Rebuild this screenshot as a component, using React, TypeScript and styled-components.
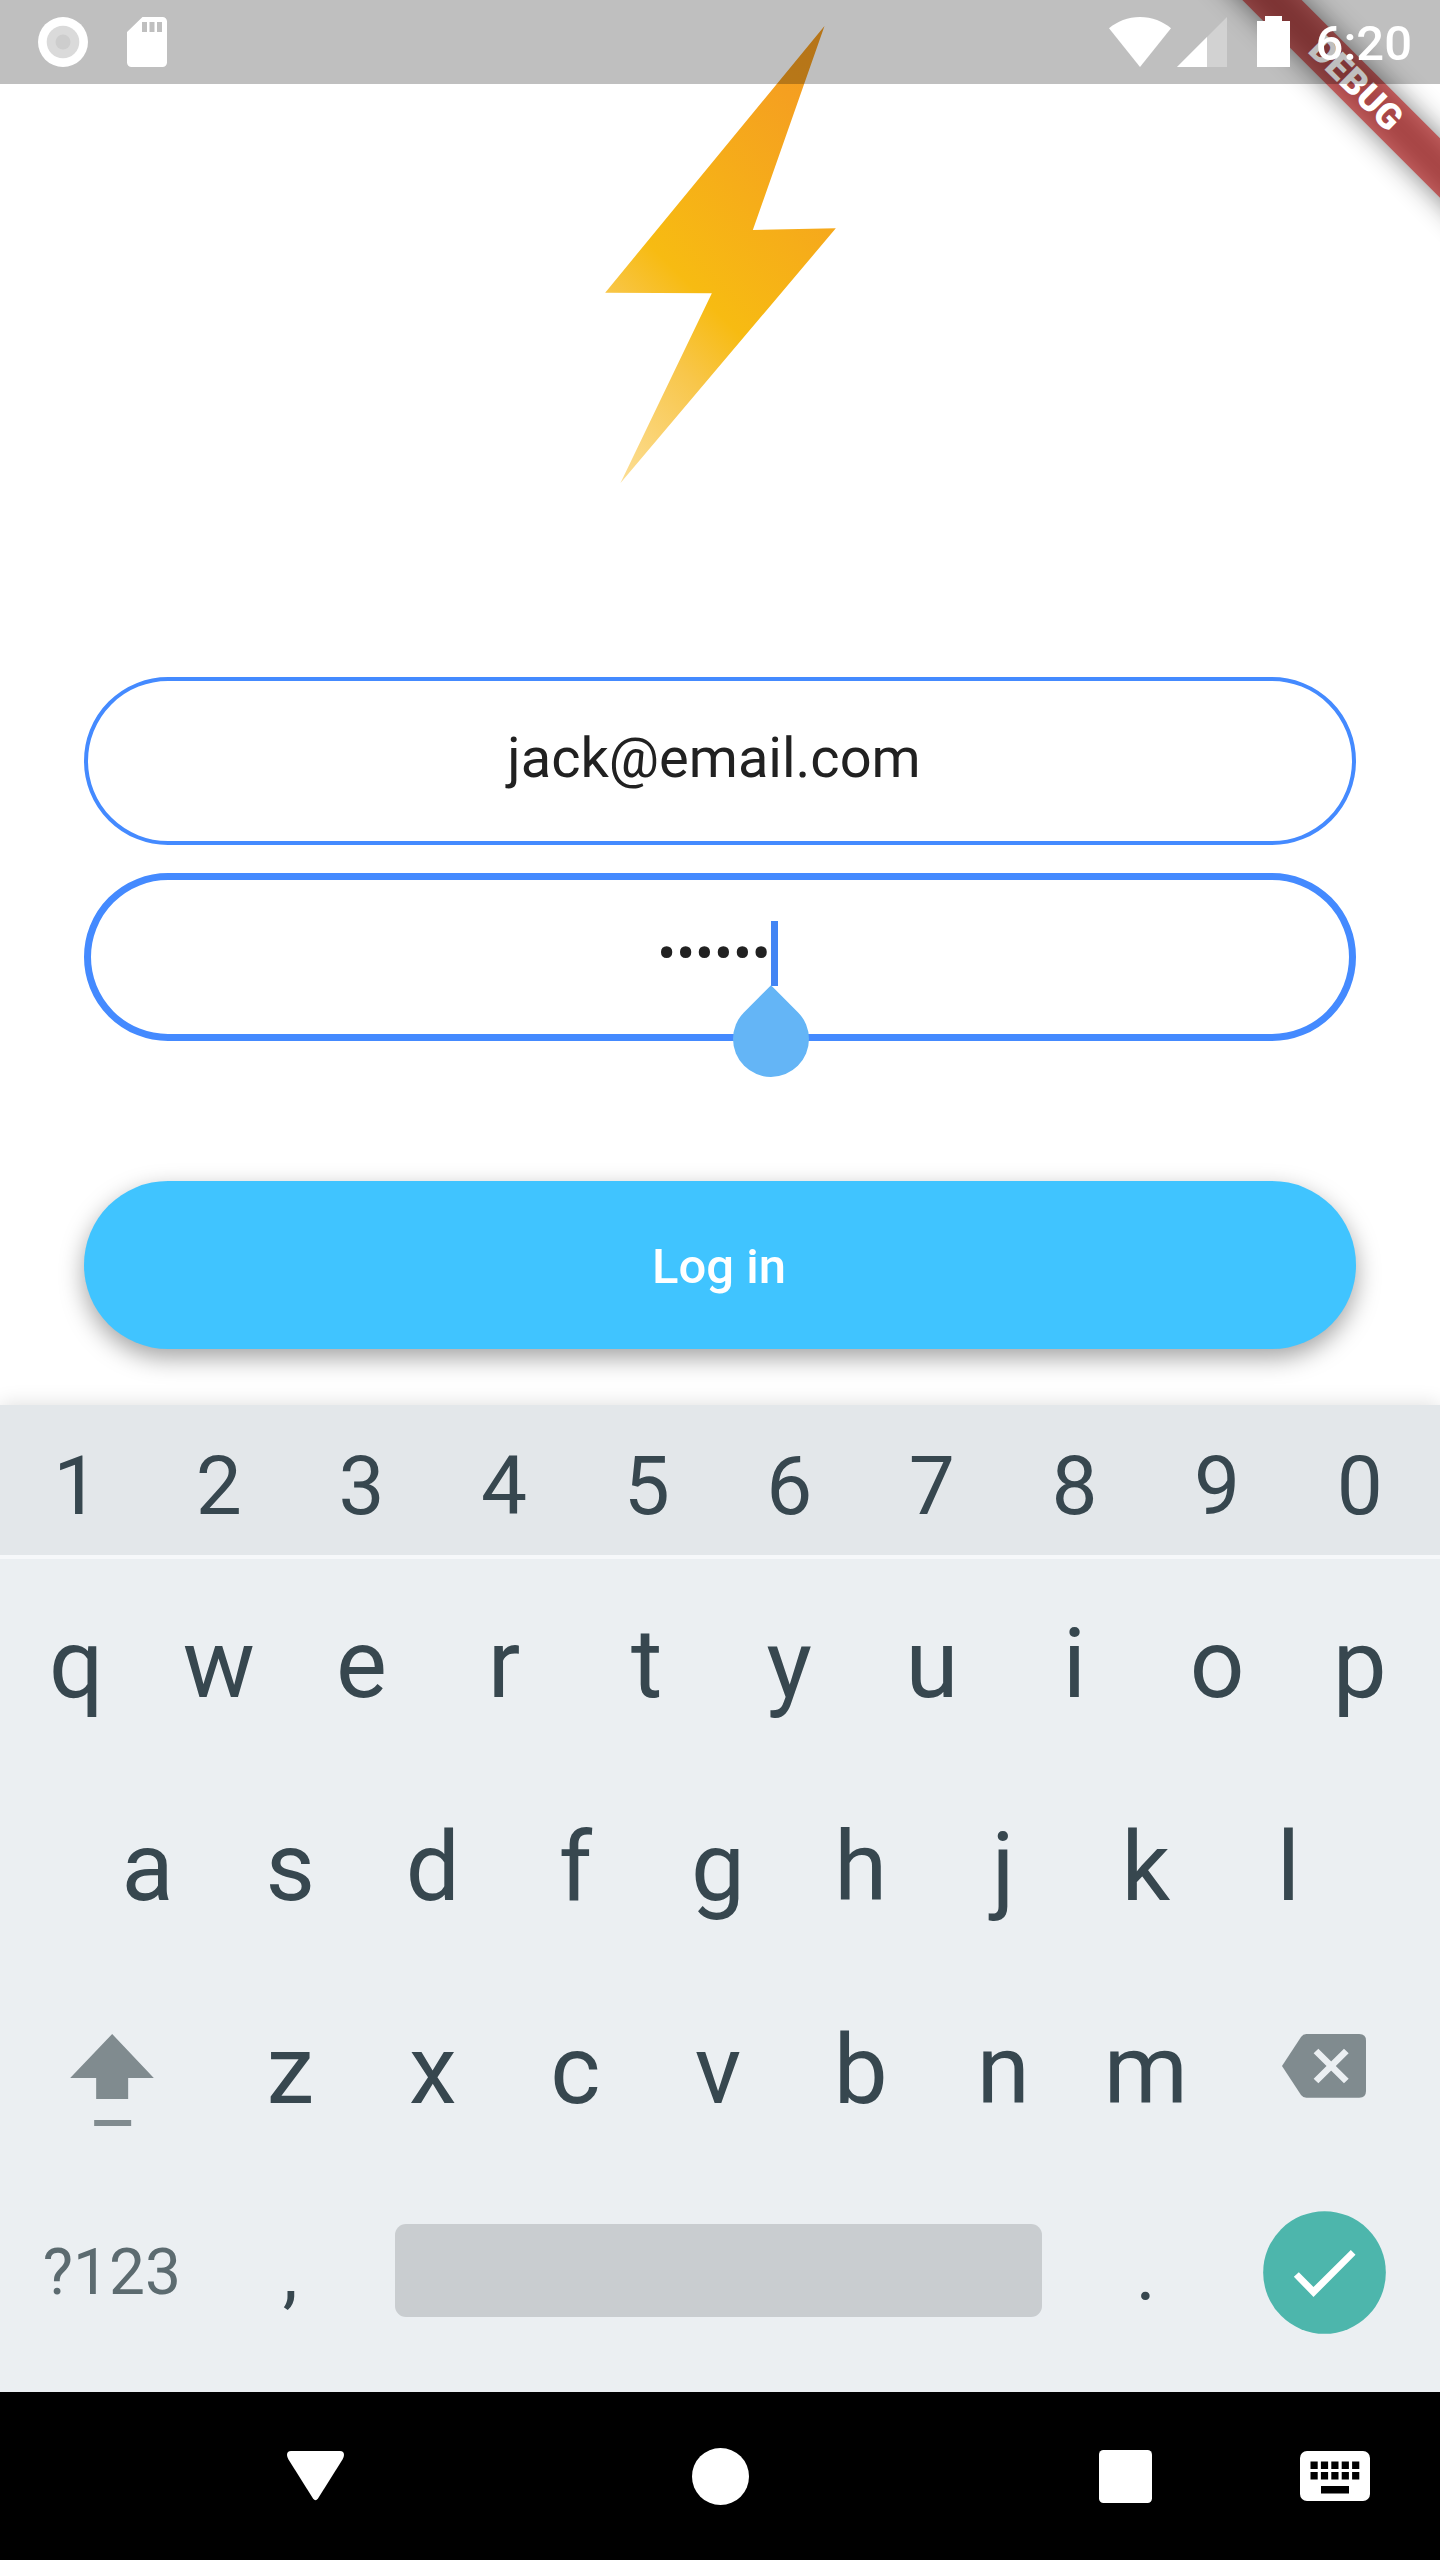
import React, { useState } from "react";
import styled, { createGlobalStyle } from "styled-components";

const GlobalStyle = createGlobalStyle`
  *, *::before, *::after { box-sizing: border-box; }
  body {
    margin: 0;
    background: #ffffff;
    font-family: Roboto, "Liberation Sans", sans-serif;
  }
  button, input { font-family: inherit; }
`;

const Screen = styled.div`
  position: relative;
  display: flex;
  flex-direction: column;
  min-height: 100vh;
  overflow: hidden;
  background: #ffffff;
`;

/* ---------- status bar ---------- */

const StatusBar = styled.header`
  position: absolute;
  top: 0;
  left: 0;
  right: 0;
  display: flex;
  align-items: center;
  justify-content: space-between;
  height: 84px;
  padding: 0 28px 0 38px;
  background: rgba(0, 0, 0, 0.25);
  color: #ffffff;
`;

const StatusGroup = styled.div<{ $gap: number }>`
  display: flex;
  align-items: center;
  gap: ${(p) => p.$gap}px;
`;

const Clock = styled.time`
  padding-top: 4px;
  font-size: 49px;
  font-weight: 500;
  line-height: 56px;
`;

/* ---------- debug banner ---------- */

const BannerCorner = styled.div`
  position: absolute;
  top: 0;
  right: 0;
  width: 336px;
  height: 336px;
  overflow: hidden;
  pointer-events: none;
`;

const BannerBand = styled.div`
  position: absolute;
  top: 63px;
  right: -196px;
  width: 560px;
  height: 42px;
  transform: rotate(45deg);
`;

const BannerShadow = styled(BannerBand)`
  background: rgba(0, 0, 0, 0.5);
  filter: blur(14px);
`;

const BannerRibbon = styled(BannerBand)`
  background: rgba(183, 28, 28, 0.63);
  color: #ffffff;
  font-size: 36px;
  font-weight: 900;
  line-height: 42px;
  text-align: center;
`;

/* ---------- login form ---------- */

const Main = styled.main`
  display: flex;
  flex: 1 0 auto;
  flex-direction: column;
  align-items: center;
  padding: 26px 84px 56px;
`;

const Form = styled.form`
  display: flex;
  flex-direction: column;
  gap: 28px;
  width: 100%;
  margin-top: 194px;
`;

const Field = styled.div`
  position: relative;
`;

const TextInput = styled.input<{ $active?: boolean }>`
  display: block;
  width: 100%;
  height: 168px;
  padding: 0 12px 6px 0;
  border: ${(p) => (p.$active ? 7 : 4)}px solid #448aff;
  border-radius: 84px;
  outline: none;
  background: transparent;
  color: #212121;
  font-size: 56px;
  text-align: center;
`;

const Caret = styled.span`
  position: absolute;
  top: 48px;
  left: calc(50% + 51px);
  width: 7px;
  height: 65px;
  background: #4285f4;
`;

const CaretHandle = styled.span`
  position: absolute;
  top: 128px;
  left: calc(50% + 13px);
  width: 76px;
  height: 76px;
  border-radius: 0 50% 50% 50%;
  background: #64b5f6;
  transform: rotate(45deg);
`;

const LoginButton = styled.button`
  height: 168px;
  margin-top: 112px;
  padding: 2px 2px 0 0;
  border: 0;
  border-radius: 84px;
  background: #40c4ff;
  box-shadow: 0 9px 24px rgba(0, 0, 0, 0.36);
  color: #ffffff;
  font-size: 49px;
  font-weight: 500;
`;

/* ---------- keyboard ---------- */

const Keyboard = styled.section`
  position: relative;
  background: #ebeff2;
  box-shadow: 0 0 20px rgba(0, 0, 0, 0.14);
  color: #37474f;
`;

const KeyGrid = styled.div`
  display: grid;
  grid-template-columns: repeat(20, 1fr);
  grid-auto-rows: 203px;
  padding: 3px 9px 18px 5px;
`;

const NumberRow = styled(KeyGrid)`
  grid-auto-rows: 138px;
  padding: 12px 9px 0 5px;
  border-bottom: 4px solid #f6f8fa;
  background: #e3e7ea;
  background-clip: padding-box;
`;

const KEY_SIZES = { digit: 82, letter: 96, mark: 76, mode: 64 };

const Key = styled.button<{
  $span?: number;
  $start?: number;
  $kind?: keyof typeof KEY_SIZES;
}>`
  display: flex;
  align-items: center;
  justify-content: center;
  grid-column: ${(p) => p.$start ?? "auto"} / span ${(p) => p.$span ?? 2};
  min-width: 0;
  padding: 0;
  border: 0;
  background: none;
  color: ${(p) => (p.$kind === "mode" ? "#5c6b70" : "inherit")};
  font-size: ${(p) => KEY_SIZES[p.$kind ?? "letter"]}px;
`;

const SpaceKey = styled.button`
  grid-column: span 10;
  align-self: center;
  height: 93px;
  margin: 0 33px 4px;
  border: 0;
  border-radius: 11px;
  background: #c9cdd0;
`;

/* ---------- navigation bar ---------- */

const NavBar = styled.nav`
  display: grid;
  grid-template-columns: 14fr 14fr 13fr 14fr 13fr 14fr 14fr;
  height: 168px;
  background: #000000;
`;

const NavButton = styled.button<{ $column: number }>`
  display: flex;
  align-items: center;
  justify-content: center;
  grid-column: ${(p) => p.$column};
  padding: 0;
  border: 0;
  background: none;
`;

/* ---------- drawings ---------- */

const Bolt = () => (
  <svg width="231" height="457" viewBox="74 77 692 1371" role="img" aria-label="Lightning bolt">
    <defs>
      <linearGradient id="bolt" gradientUnits="userSpaceOnUse" x1="120" y1="1448" x2="1111" y2="457">
        <stop offset="0" stopColor="#fcde95" />
        <stop offset="0.265" stopColor="#f8c64a" />
        <stop offset="0.405" stopColor="#f7bb12" />
        <stop offset="0.84" stopColor="#f5a020" />
        <stop offset="1" stopColor="#f39c20" />
      </linearGradient>
    </defs>
    <path d="M732 77 517 689 766 684 120 1448 394 879 74 877Z" fill="url(#bolt)" />
  </svg>
);

const RecordIcon = () => (
  <svg width="50" height="50" viewBox="0 0 50 50" aria-hidden="true">
    <circle cx="25" cy="25" r="25" fill="#fff" />
    <circle cx="25" cy="25" r="16.3" fill="#dadada" />
    <circle cx="25" cy="25" r="7.5" fill="#cdcdcd" />
  </svg>
);

const SdCardIcon = () => (
  <svg width="40" height="50" viewBox="0 0 40 50" aria-hidden="true">
    <path
      fill="#fff"
      fillRule="evenodd"
      d="M15.500 0H35.500A4.500 4.500 0 0 1 40 4.500V45.500A4.500 4.500 0 0 1 35.500 50H4.500A4.500 4.500 0 0 1 0 45.500V15ZM15 5V15H20V5ZM22.500 5V15H27.500V5ZM30 5V15H35V5Z"
    />
  </svg>
);

const WifiIcon = () => (
  <svg width="62" height="50" viewBox="0 0 62 50" aria-hidden="true">
    <path fill="#fff" d="M31 50 0 11.300C8 4.500 19 0 31 0S54 4.500 62 11.300Z" />
  </svg>
);

const CellIcon = () => (
  <svg width="50" height="50" viewBox="0 0 50 50" aria-hidden="true">
    <path fill="#fff" fillOpacity="0.3" d="M0 50 50 0V50Z" />
    <path fill="#fff" d="M0 50 30 20V50Z" />
  </svg>
);

const BatteryIcon = () => (
  <svg width="33" height="52" viewBox="0 0 33 52" aria-hidden="true">
    <path fill="#fff" d="M8 0H25V5H33V51H0V5H8Z" />
  </svg>
);

const ShiftIcon = () => (
  <svg width="84" height="112" viewBox="213 162 251 336" fill="#808b8f" aria-hidden="true">
    <path d="M339 222 464 354H387V417H291V354H213Z" />
    <path d="M285 480H396V498H285Z" />
  </svg>
);

const DeleteIcon = () => (
  <svg width="84" height="72" viewBox="849 222 252 216" aria-hidden="true">
    <path
      fill="#808b8f"
      d="M849 318 906 231Q912 222 922 222H1081Q1101 222 1101 242V393Q1101 413 1081 413H922Q912 413 906 405Z"
    />
    <path stroke="#ebeff2" strokeWidth="20" d="M951 273 1042 363M1042 273 951 363" />
  </svg>
);

const EnterIcon = () => (
  <svg width="123" height="123" viewBox="793 752 368 369" aria-hidden="true">
    <circle cx="977" cy="936.500" r="184" fill="#4db6ac" />
    <path fill="#fff" d="M885 949 900 936 944 980 1056 869 1070 883 944 1010Z" />
  </svg>
);

const BackIcon = () => (
  <svg width="57" height="50" viewBox="0 0 57 50" aria-hidden="true">
    <path fill="#fff" d="M4 0H53Q57 0 57 4 57 6 55.500 8.500L31 47.500Q28.500 51 26 47.500L1.500 8.500Q0 6 0 4 0 0 4 0Z" />
  </svg>
);

const HomeIcon = () => (
  <svg width="57" height="57" viewBox="0 0 57 57" aria-hidden="true">
    <circle cx="28.500" cy="28.500" r="28.500" fill="#fff" />
  </svg>
);

const RecentsIcon = () => (
  <svg width="53" height="53" viewBox="0 0 53 53" aria-hidden="true">
    <rect width="53" height="53" rx="4.500" fill="#fff" />
  </svg>
);

const KeyboardIcon = () => (
  <svg width="70" height="50" viewBox="0 0 70 50" aria-hidden="true">
    <rect width="70" height="50" rx="7" fill="#fff" />
    {[0, 1, 2, 3, 4].map((i) => (
      <g key={i}>
        <rect x={10.5 + i * 10.4} y="10.500" width="7.200" height="7.500" />
        <rect x={10.5 + i * 10.4} y="21" width="7.200" height="7.500" />
      </g>
    ))}
    <rect x="21" y="35" width="28" height="7.500" />
  </svg>
);

/* ---------- page ---------- */

const DIGITS = "1234567890".split("");
const TOP_LETTERS = "qwertyuiop".split("");
const HOME_LETTERS = "asdfghjkl".split("");
const BOTTOM_LETTERS = "zxcvbnm".split("");

export default function App() {
  const [email, setEmail] = useState("jack@email.com");
  const [password, setPassword] = useState("secret");

  return (
    <>
      <GlobalStyle />
      <Screen>
        <Main>
          <Bolt />
          <Form onSubmit={(e) => e.preventDefault()}>
            <Field>
              <TextInput
                type="email"
                aria-label="Email"
                value={email}
                onChange={(e) => setEmail(e.target.value)}
              />
            </Field>
            <Field>
              <TextInput
                $active
                type="password"
                aria-label="Password"
                value={password}
                onChange={(e) => setPassword(e.target.value)}
              />
              <Caret />
              <CaretHandle />
            </Field>
            <LoginButton type="submit">Log in</LoginButton>
          </Form>
        </Main>

        <Keyboard aria-label="Keyboard">
          <NumberRow>
            {DIGITS.map((d) => (
              <Key key={d} type="button" $kind="digit">{d}</Key>
            ))}
          </NumberRow>
          <KeyGrid>
            {TOP_LETTERS.map((l) => (
              <Key key={l} type="button">{l}</Key>
            ))}
            {HOME_LETTERS.map((l, i) => (
              <Key key={l} type="button" $start={i === 0 ? 2 : undefined}>{l}</Key>
            ))}
            <Key type="button" $start={1} $span={3} aria-label="Shift"><ShiftIcon /></Key>
            {BOTTOM_LETTERS.map((l) => (
              <Key key={l} type="button">{l}</Key>
            ))}
            <Key type="button" $span={3} aria-label="Delete"><DeleteIcon /></Key>
            <Key type="button" $span={3} $kind="mode">?123</Key>
            <Key type="button" $kind="mark">,</Key>
            <SpaceKey type="button" aria-label="Space" />
            <Key type="button" $kind="mark">.</Key>
            <Key type="button" $span={3} aria-label="Done"><EnterIcon /></Key>
          </KeyGrid>
        </Keyboard>

        <NavBar aria-label="System navigation">
          <NavButton type="button" $column={2} aria-label="Back"><BackIcon /></NavButton>
          <NavButton type="button" $column={4} aria-label="Home"><HomeIcon /></NavButton>
          <NavButton type="button" $column={6} aria-label="Recent apps"><RecentsIcon /></NavButton>
          <NavButton type="button" $column={7} aria-label="Switch keyboard"><KeyboardIcon /></NavButton>
        </NavBar>

        <BannerCorner>
          <BannerShadow />
          <BannerRibbon>DEBUG</BannerRibbon>
        </BannerCorner>

        <StatusBar>
          <StatusGroup $gap={39}>
            <RecordIcon />
            <SdCardIcon />
          </StatusGroup>
          <StatusGroup $gap={26}>
            <StatusGroup $gap={30}>
              <StatusGroup $gap={6}>
                <WifiIcon />
                <CellIcon />
              </StatusGroup>
              <BatteryIcon />
            </StatusGroup>
            <Clock>6:20</Clock>
          </StatusGroup>
        </StatusBar>
      </Screen>
    </>
  );
}
